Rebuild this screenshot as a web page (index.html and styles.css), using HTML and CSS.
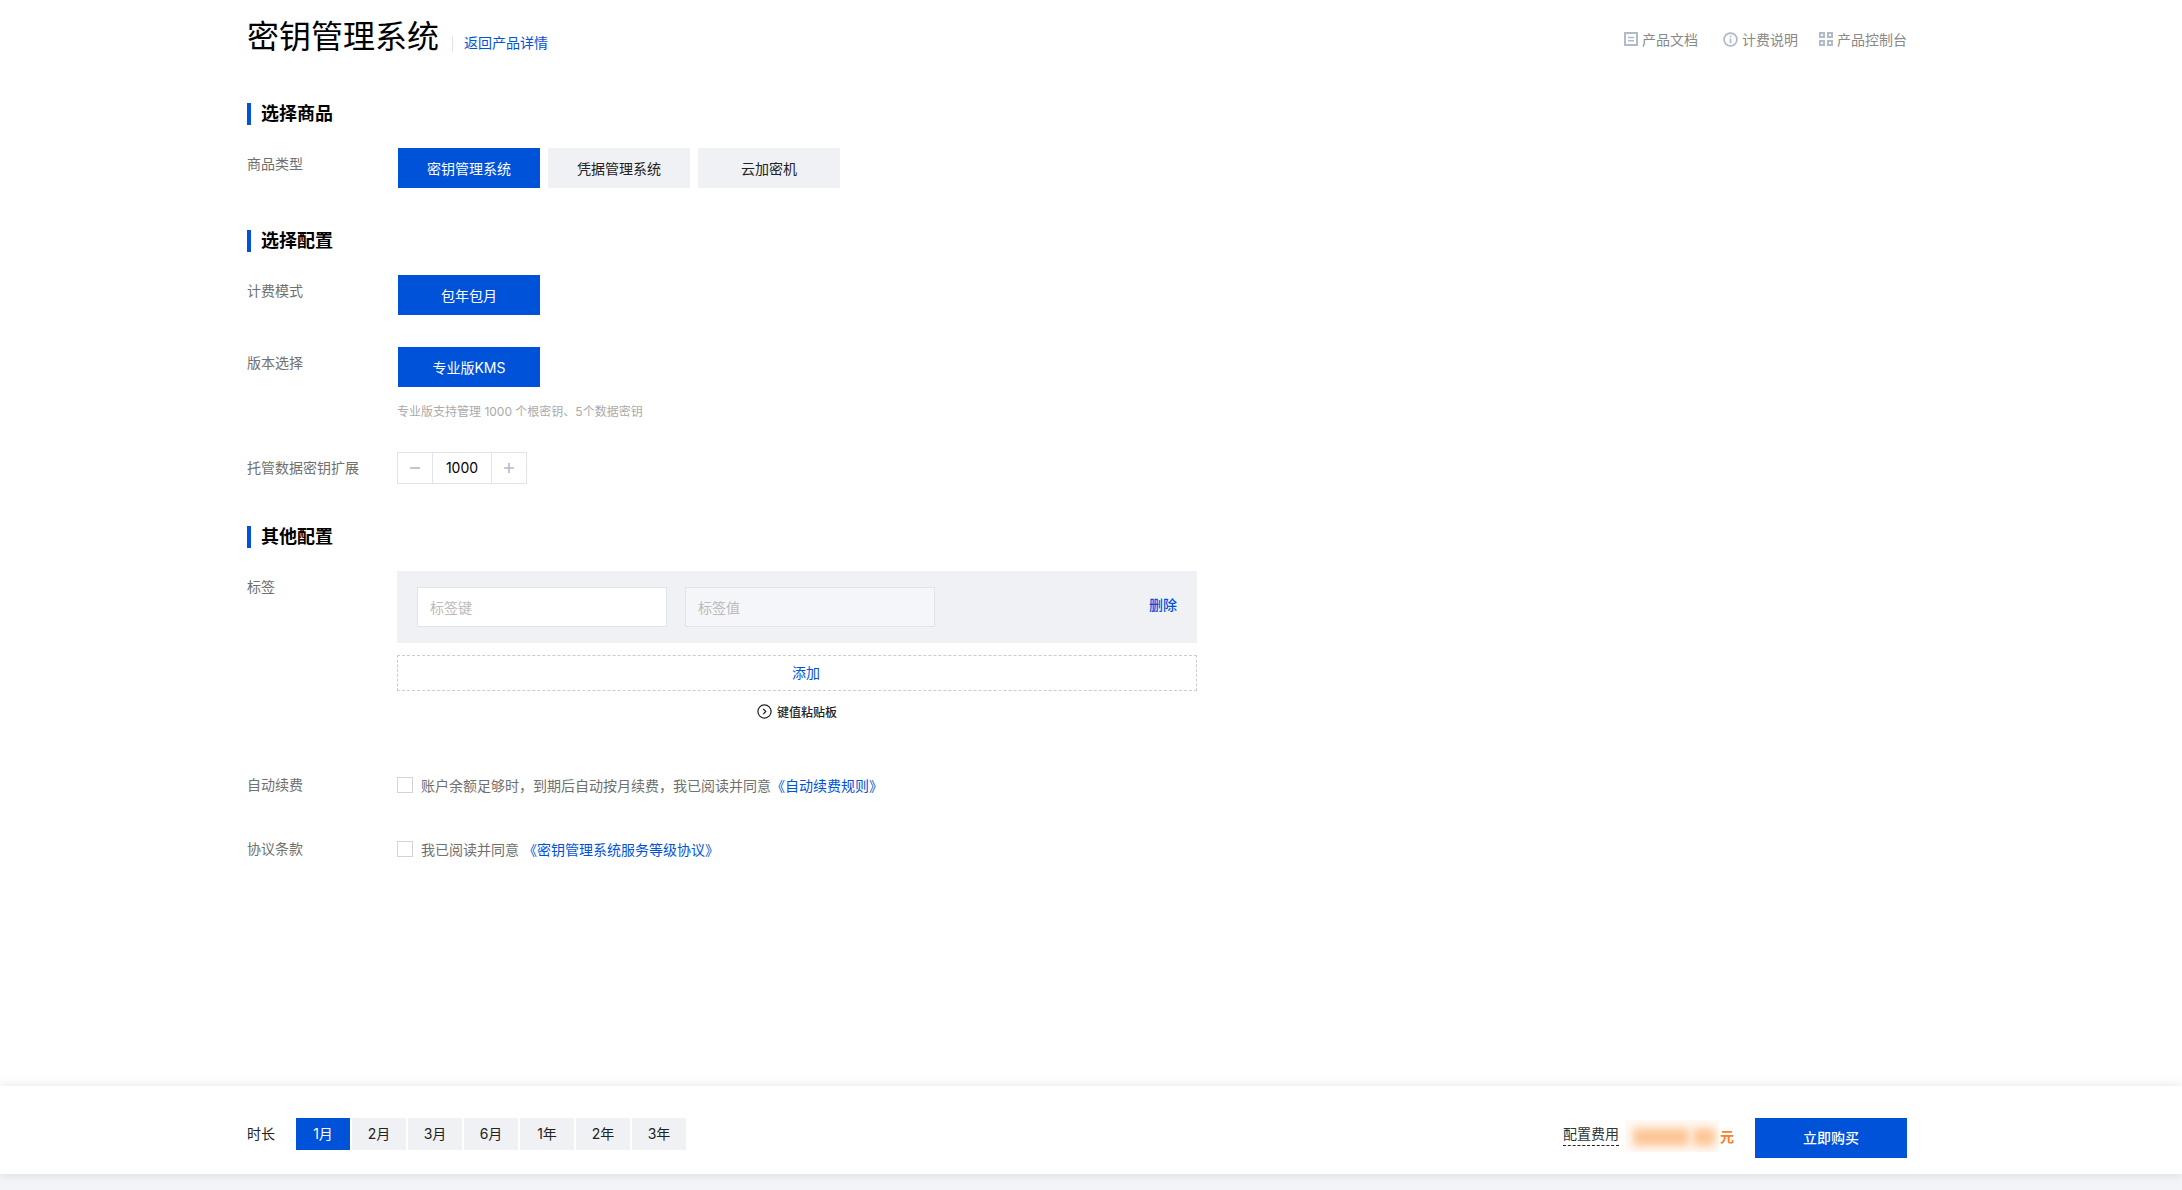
FILE: index.html
```html
<!DOCTYPE html>
<html lang="zh-CN">
<head>
    <meta charset="UTF-8">
    <meta name="viewport" content="width=device-width, initial-scale=1.0">
    <title>密钥管理系统</title>
    <link rel="stylesheet" href="styles.css">
</head>
<body>
    <div class="container">
        <div class="top-bar">
            <div class="top-left">
                <h1>密钥管理系统</h1>
                <a class="back-link">返回产品详情</a>
            </div>
            <div class="top-right">
                <a class="top-link">
                    <svg width="14" height="14" viewBox="0 0 14 14" fill="none" stroke="#b1bac8" stroke-width="2"><path d="M1 1h12v12H1z"/><path d="M4 5.5h6M4 8.8h6" stroke-width="1.5"/></svg>
                    产品文档
                </a>
                <a class="top-link">
                    <svg width="15" height="15" viewBox="0 0 15 15" fill="none" stroke="#b1bac8" stroke-width="1.7"><circle cx="7.5" cy="7.5" r="6.4"/><path d="M7.5 6.5v4.7M7.5 3.6v1.7"/></svg>
                    计费说明
                </a>
                <a class="top-link top-link-last">
                    <svg width="14" height="14" viewBox="0 0 14 14" fill="none" stroke="#b1bac8" stroke-width="2"><path d="M1 1h4v4H1zM9 1h4v4H9zM1 9h4v4H1zM9 9h4v4H9z"/></svg>
                    产品控制台
                </a>
            </div>
        </div>

        <h2 class="section-title">选择商品</h2>
        <div class="row">
            <div class="row-label">商品类型</div>
            <div class="options">
                <button class="option active">密钥管理系统</button>
                <button class="option">凭据管理系统</button>
                <button class="option">云加密机</button>
            </div>
        </div>

        <h2 class="section-title">选择配置</h2>
        <div class="row">
            <div class="row-label">计费模式</div>
            <div class="options">
                <button class="option active">包年包月</button>
            </div>
        </div>
        <div class="row row-next">
            <div class="row-label">版本选择</div>
            <div>
                <div class="options">
                    <button class="option active">专业版KMS</button>
                </div>
                <p class="note">专业版支持管理 1000 个根密钥、5个数据密钥</p>
            </div>
        </div>
        <div class="row row-stepper">
            <div class="row-label">托管数据密钥扩展</div>
            <div class="stepper">
                <span class="step-btn">
                    <svg width="10" height="10" viewBox="0 0 10 10" stroke="#b1bac8" stroke-width="1.6"><path d="M0 5h10"/></svg>
                </span>
                <span class="step-value">1000</span>
                <span class="step-btn">
                    <svg width="10" height="10" viewBox="0 0 10 10" stroke="#b1bac8" stroke-width="1.6"><path d="M0 5h10M5 0v10"/></svg>
                </span>
            </div>
        </div>

        <h2 class="section-title">其他配置</h2>
        <div class="row">
            <div class="row-label">标签</div>
            <div class="tags">
                <div class="tag-box">
                    <input class="tag-input" type="text" placeholder="标签键">
                    <input class="tag-input tag-value" type="text" placeholder="标签值">
                    <a class="tag-delete">删除</a>
                </div>
                <div class="tag-add"><span>添加</span></div>
                <div class="tag-paste">
                    <svg width="15" height="15" viewBox="0 0 15 15" fill="none" stroke="#222" stroke-width="1.2"><circle cx="7.5" cy="7.5" r="6.6"/><path d="M6.2 4.9 8.8 7.5 6.2 10.1"/></svg>
                    键值粘贴板
                </div>
            </div>
        </div>
        <div class="row row-check first-check">
            <div class="row-label">自动续费</div>
            <label class="check-line">
                <span class="checkbox"></span>
                <span>账户余额足够时，到期后自动按月续费，我已阅读并同意<a class="text-link">《自动续费规则》</a></span>
            </label>
        </div>
        <div class="row row-check">
            <div class="row-label">协议条款</div>
            <label class="check-line">
                <span class="checkbox"></span>
                <span>我已阅读并同意 <a class="text-link">《密钥管理系统服务等级协议》</a></span>
            </label>
        </div>
    </div>

    <div class="footer">
        <div class="footer-left">
            <span class="duration-label">时长</span>
            <div class="durations">
                <button class="duration active">1月</button>
                <button class="duration">2月</button>
                <button class="duration">3月</button>
                <button class="duration">6月</button>
                <button class="duration">1年</button>
                <button class="duration">2年</button>
                <button class="duration">3年</button>
            </div>
        </div>
        <div class="footer-right">
            <span class="price-label">配置费用</span>
            <span class="price-blur">
                <span class="blur-main"></span>
                <span class="blur-tail"></span>
            </span>
            <span class="price-unit">元</span>
            <button class="buy">立即购买</button>
        </div>
    </div>
</body>
</html>
```
FILE: styles.css
```css
* {
    box-sizing: border-box;
}

body {
    margin: 0;
    min-height: 100vh;
    display: flex;
    flex-direction: column;
    font-family: "Inter", "Noto Sans CJK SC", "Liberation Sans", sans-serif;
    font-size: 14px;
    color: #222;
    background-color: #f3f4f7;
}

a {
    color: #0052d9;
    text-decoration: none;
}

.container {
    flex: 1;
    padding: 0 275px 0 247px;
    background-color: #fff;
}

.top-bar {
    display: flex;
    justify-content: space-between;
    height: 103px;
    padding-top: 15px;
}

.top-left {
    display: flex;
    align-items: flex-start;
}

.top-left h1 {
    margin: 0;
    font-size: 32px;
    font-weight: 400;
    line-height: 44px;
    color: #000;
}

.back-link {
    margin: 21px 0 0 13px;
    padding-left: 11px;
    border-left: 1px solid #dfe3ea;
    height: 16px;
    line-height: 14px;
}

.top-right {
    display: flex;
    gap: 25px;
    padding-top: 14px;
}

.top-link {
    display: flex;
    align-items: center;
    gap: 4px;
    height: 20px;
    color: #888;
}

.top-link-last {
    margin-left: -4px;
}

.section-title {
    height: 22px;
    margin: 42px 0 23px;
    padding-left: 10px;
    font-size: 18px;
    font-weight: 700;
    line-height: 22px;
    color: #000;
    border-left: 4px solid #0052d9;
}

.top-bar + .section-title {
    margin-top: 0;
}

.row {
    display: flex;
}

.row-next {
    margin-top: 32px;
}

.row-stepper {
    margin-top: 30px;
}

.row-check {
    margin-top: 32px;
}

.first-check {
    margin-top: 48px;
}

.row-label {
    flex: none;
    width: 150px;
    line-height: 32px;
    color: #707070;
}

.options {
    display: flex;
    gap: 8px;
    padding-left: 1px;
}

.option {
    width: 142px;
    height: 40px;
    padding: 0;
    border: none;
    font-family: inherit;
    font-size: 14px;
    color: #222;
    background-color: #f0f1f5;
}

.option.active {
    color: #fff;
    background-color: #0052d9;
}

.note {
    margin: 15px 0 0;
    font-size: 12px;
    line-height: 20px;
    color: #aaa;
}

.stepper {
    display: flex;
    height: 32px;
    border: 1px solid #dfe3ea;
}

.step-btn {
    display: flex;
    align-items: center;
    justify-content: center;
    width: 34px;
}

.step-value {
    width: 60px;
    line-height: 30px;
    text-align: center;
    color: #000;
    border-left: 1px solid #dfe3ea;
    border-right: 1px solid #dfe3ea;
}

.tags {
    width: 800px;
}

.tag-box {
    display: flex;
    align-items: center;
    gap: 18px;
    height: 72px;
    padding: 0 20px;
    background-color: #f0f1f5;
}

.tag-input {
    width: 250px;
    height: 40px;
    padding: 0 12px;
    border: 1px solid #dfe3ea;
    font-family: inherit;
    font-size: 14px;
    background-color: #fff;
}

.tag-input::placeholder {
    color: #bbb;
}

.tag-value {
    background-color: #f5f6fa;
}

.tag-delete {
    margin: -7px 0 0 auto;
    font-weight: 500;
}

.tag-add {
    height: 36px;
    margin-top: 12px;
    line-height: 34px;
    text-align: center;
    color: #0052d9;
    border: 1px dashed #ccc;
}

.tag-add span {
    margin-left: 18px;
}

.tag-paste {
    display: flex;
    align-items: center;
    justify-content: center;
    gap: 5px;
    height: 20px;
    margin-top: 10px;
    font-size: 12px;
    font-weight: 500;
    color: #222;
}

.check-line {
    display: flex;
    align-items: center;
    gap: 8px;
    height: 32px;
    color: #707070;
}

.checkbox {
    width: 16px;
    height: 16px;
    border: 1px solid #d0d5dd;
    background-color: #fff;
}

.text-link {
    color: #0052d9;
}

.footer {
    display: flex;
    justify-content: space-between;
    height: 88px;
    margin-bottom: 16px;
    padding: 32px 275px 0 247px;
    background-color: #fff;
    box-shadow: 0 0 10px rgba(100, 110, 140, 0.2);
}

.footer-left {
    display: flex;
    align-items: center;
    height: 30px;
}

.duration-label {
    width: 49px;
    color: #222;
}

.durations {
    display: flex;
    gap: 2px;
    margin-bottom: -2px;
}

.duration {
    width: 54px;
    height: 32px;
    padding: 0 0 2px;
    border: none;
    font-family: inherit;
    font-size: 14px;
    color: #222;
    background-color: #f0f1f5;
}

.duration.active {
    color: #fff;
    background-color: #0052d9;
}

.footer-right {
    display: flex;
    align-items: flex-start;
}

.price-label {
    margin-top: 5px;
    height: 23px;
    line-height: 21px;
    color: #333;
    border-bottom: 1px dashed #222;
}

.price-blur {
    display: flex;
    gap: 4px;
    width: 94px;
    height: 32px;
    margin: 2px 0 0 6px;
    padding: 8px 4px 6px 8px;
    overflow: hidden;
    background-color: #fffaf6;
}

.blur-main,
.blur-tail {
    height: 18px;
    background-color: #fdc596;
    filter: blur(4px);
}

.blur-main {
    width: 56px;
}

.blur-tail {
    width: 22px;
}

.price-unit {
    margin: 9px 21px 0 1px;
    line-height: 20px;
    font-weight: 700;
    color: #ff7f27;
}

.buy {
    width: 152px;
    height: 40px;
    padding: 0 0 3px;
    border: none;
    font-family: inherit;
    font-size: 14px;
    font-weight: 500;
    color: #fff;
    background-color: #0052d9;
}
```
